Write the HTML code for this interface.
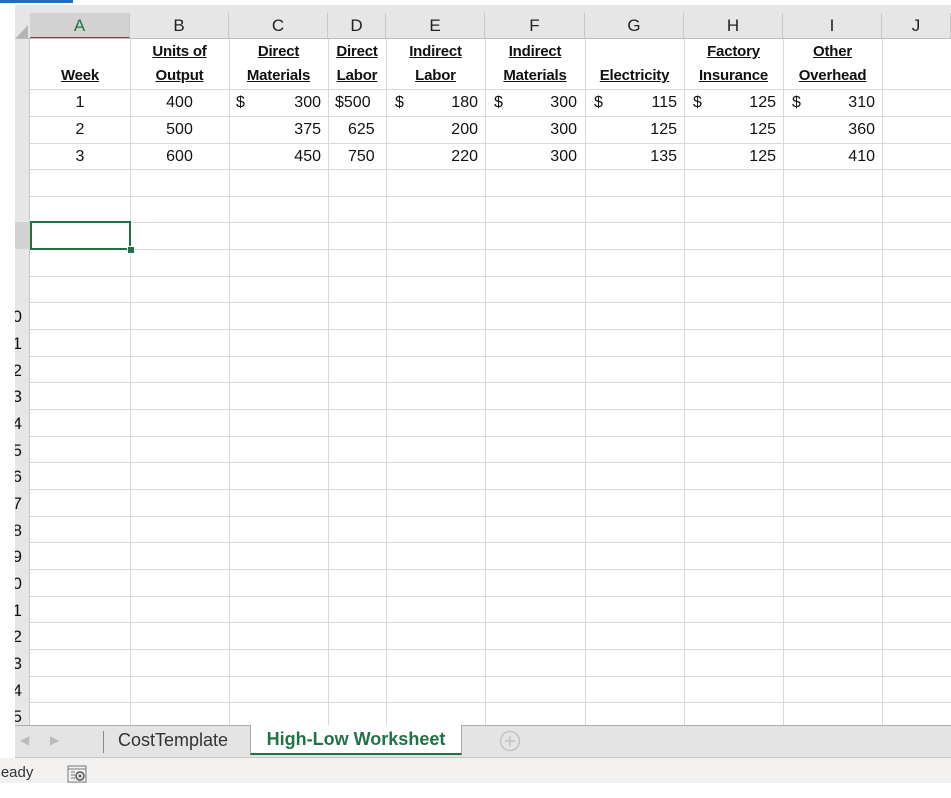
<!DOCTYPE html>
<html><head><meta charset="utf-8"><style>
body{margin:0;width:951px;height:798px;background:#fff;position:relative;overflow:hidden;font-family:"Liberation Sans",Arial,sans-serif;}
.a{position:absolute;}
.ch{position:absolute;top:13px;height:26px;line-height:26px;text-align:center;font-size:17px;color:#222;border-right:1px solid #c8c8c8;box-sizing:border-box;}
.vl{position:absolute;top:39px;width:1px;height:687px;background:#d9d9d9;}
.hl{position:absolute;left:30px;width:921px;height:1px;background:#d9d9d9;}
.rh{position:absolute;left:15px;width:15px;overflow:hidden;height:26px;}
.rh span{position:absolute;right:8px;top:4px;font-size:17px;color:#111;}
.h{position:absolute;font-size:15px;font-weight:bold;text-decoration:underline;color:#111;text-align:center;white-space:nowrap;letter-spacing:-0.2px;}
.n{position:absolute;font-size:16px;color:#111;white-space:nowrap;}
</style></head><body>
<div class="a" style="left:0;top:0;width:73px;height:3px;background:#1e6fc9"></div>
<div class="a" style="left:15px;top:5px;width:936px;height:34px;background:#e6e6e6"></div>
<div class="a" style="left:15px;top:39px;width:15px;height:687px;background:#e6e6e6;border-right:1px solid #c8c8c8;box-sizing:border-box"></div>
<svg class="a" style="left:15px;top:13px" width="15" height="26"><polygon points="13,12 13,25 1,25" fill="#b4b4b4"/></svg>
<div class="ch" style="left:30px;width:100px;background:#d2d2d2;color:#217346;border-bottom:2px solid #217346">A</div>
<div class="ch" style="left:130px;width:99px">B</div>
<div class="ch" style="left:229px;width:99px">C</div>
<div class="ch" style="left:328px;width:58px">D</div>
<div class="ch" style="left:386px;width:99px">E</div>
<div class="ch" style="left:485px;width:100px">F</div>
<div class="ch" style="left:585px;width:99px">G</div>
<div class="ch" style="left:684px;width:99px">H</div>
<div class="ch" style="left:783px;width:99px">I</div>
<div class="ch" style="left:882px;width:69px">J</div>
<div class="a" style="left:15px;top:38px;width:936px;height:1px;background:#bdbdbd"></div>

<div class="vl" style="left:130px"></div><div class="vl" style="left:229px"></div><div class="vl" style="left:328px"></div><div class="vl" style="left:386px"></div><div class="vl" style="left:485px"></div><div class="vl" style="left:585px"></div><div class="vl" style="left:684px"></div><div class="vl" style="left:783px"></div><div class="vl" style="left:882px"></div>

<div class="hl" style="top:89px"></div><div class="hl" style="top:116px"></div><div class="hl" style="top:143px"></div><div class="hl" style="top:169px"></div><div class="hl" style="top:196px"></div><div class="hl" style="top:222px"></div><div class="hl" style="top:249px"></div><div class="hl" style="top:276px"></div><div class="hl" style="top:302px"></div><div class="hl" style="top:329px"></div><div class="hl" style="top:356px"></div><div class="hl" style="top:382px"></div><div class="hl" style="top:409px"></div><div class="hl" style="top:436px"></div><div class="hl" style="top:462px"></div><div class="hl" style="top:489px"></div><div class="hl" style="top:516px"></div><div class="hl" style="top:542px"></div><div class="hl" style="top:569px"></div><div class="hl" style="top:596px"></div><div class="hl" style="top:622px"></div><div class="hl" style="top:649px"></div><div class="hl" style="top:676px"></div><div class="hl" style="top:702px"></div>

<div class="rh" style="top:303px"><span>10</span></div>
<div class="rh" style="top:330px"><span>11</span></div>
<div class="rh" style="top:357px"><span>12</span></div>
<div class="rh" style="top:383px"><span>13</span></div>
<div class="rh" style="top:410px"><span>14</span></div>
<div class="rh" style="top:437px"><span>15</span></div>
<div class="rh" style="top:463px"><span>16</span></div>
<div class="rh" style="top:490px"><span>17</span></div>
<div class="rh" style="top:517px"><span>18</span></div>
<div class="rh" style="top:543px"><span>19</span></div>
<div class="rh" style="top:570px"><span>20</span></div>
<div class="rh" style="top:597px"><span>21</span></div>
<div class="rh" style="top:623px"><span>22</span></div>
<div class="rh" style="top:650px"><span>23</span></div>
<div class="rh" style="top:677px"><span>24</span></div>
<div class="rh" style="top:703px"><span>25</span></div>
<div class="a" style="left:15px;top:222px;width:15px;height:27px;background:#d2d2d2"></div>

<div class="h" style="left:30px;width:100px;top:67px">Week</div>
<div class="h" style="left:130px;width:99px;top:43px">Units of </div>
<div class="h" style="left:130px;width:99px;top:67px">Output</div>
<div class="h" style="left:229px;width:99px;top:43px">Direct </div>
<div class="h" style="left:229px;width:99px;top:67px">Materials</div>
<div class="h" style="left:328px;width:58px;top:43px">Direct </div>
<div class="h" style="left:328px;width:58px;top:67px">Labor</div>
<div class="h" style="left:386px;width:99px;top:43px">Indirect </div>
<div class="h" style="left:386px;width:99px;top:67px">Labor</div>
<div class="h" style="left:485px;width:100px;top:43px">Indirect </div>
<div class="h" style="left:485px;width:100px;top:67px">Materials</div>
<div class="h" style="left:585px;width:99px;top:67px">Electricity</div>
<div class="h" style="left:684px;width:99px;top:43px">Factory </div>
<div class="h" style="left:684px;width:99px;top:67px">Insurance</div>
<div class="h" style="left:783px;width:99px;top:43px">Other </div>
<div class="h" style="left:783px;width:99px;top:67px">Overhead</div>

<div class="n" style="left:30px;width:100px;text-align:center;top:94px">1</div>
<div class="n" style="left:30px;width:100px;text-align:center;top:121px">2</div>
<div class="n" style="left:30px;width:100px;text-align:center;top:148px">3</div>
<div class="n" style="left:130px;width:99px;text-align:center;top:94px">400</div>
<div class="n" style="left:130px;width:99px;text-align:center;top:121px">500</div>
<div class="n" style="left:130px;width:99px;text-align:center;top:148px">600</div>

<div class="n" style="left:236px;top:94px">$</div>
<div class="n" style="left:229px;width:92px;text-align:right;top:94px">300</div>
<div class="n" style="left:229px;width:92px;text-align:right;top:121px">375</div>
<div class="n" style="left:229px;width:92px;text-align:right;top:148px">450</div>

<div class="n" style="left:335px;top:94px">$500</div>
<div class="n" style="left:348px;top:121px">625</div>
<div class="n" style="left:348px;top:148px">750</div>

<div class="n" style="left:395px;top:94px">$</div>
<div class="n" style="left:386px;width:92px;text-align:right;top:94px">180</div>
<div class="n" style="left:386px;width:92px;text-align:right;top:121px">200</div>
<div class="n" style="left:386px;width:92px;text-align:right;top:148px">220</div>

<div class="n" style="left:494px;top:94px">$</div>
<div class="n" style="left:485px;width:92px;text-align:right;top:94px">300</div>
<div class="n" style="left:485px;width:92px;text-align:right;top:121px">300</div>
<div class="n" style="left:485px;width:92px;text-align:right;top:148px">300</div>

<div class="n" style="left:594px;top:94px">$</div>
<div class="n" style="left:585px;width:92px;text-align:right;top:94px">115</div>
<div class="n" style="left:585px;width:92px;text-align:right;top:121px">125</div>
<div class="n" style="left:585px;width:92px;text-align:right;top:148px">135</div>

<div class="n" style="left:693px;top:94px">$</div>
<div class="n" style="left:684px;width:92px;text-align:right;top:94px">125</div>
<div class="n" style="left:684px;width:92px;text-align:right;top:121px">125</div>
<div class="n" style="left:684px;width:92px;text-align:right;top:148px">125</div>

<div class="n" style="left:792px;top:94px">$</div>
<div class="n" style="left:783px;width:92px;text-align:right;top:94px">310</div>
<div class="n" style="left:783px;width:92px;text-align:right;top:121px">360</div>
<div class="n" style="left:783px;width:92px;text-align:right;top:148px">410</div>

<div class="a" style="left:30px;top:221px;width:101px;height:29px;border:2px solid #217346;box-sizing:border-box"></div>
<div class="a" style="left:127px;top:246px;width:6px;height:6px;background:#217346;border:1px solid #fff"></div>

<div class="a" style="left:15px;top:725px;width:936px;height:33px;background:#e4e4e4;border-top:1px solid #ababab;border-bottom:1px solid #c6c6c6;box-sizing:border-box"></div>
<div class="a" style="left:20px;top:733px;font-size:12px;color:#bbb">&#9664;</div>
<div class="a" style="left:50px;top:733px;font-size:12px;color:#bbb">&#9654;</div>
<div class="a" style="left:103px;top:731px;width:1px;height:22px;background:#888"></div>
<div class="a" style="left:118px;top:730px;font-size:18px;color:#333">CostTemplate</div>
<div class="a" style="left:250px;top:725px;width:212px;height:30px;background:#fff;border-left:1px solid #ababab;border-right:1px solid #ababab;border-bottom:2px solid #217346;box-sizing:border-box"></div>
<div class="a" style="left:250px;top:729px;width:212px;text-align:center;font-size:18px;font-weight:bold;color:#217346">High-Low Worksheet</div>
<svg class="a" style="left:499px;top:730px" width="22" height="22"><circle cx="11" cy="11" r="9.5" fill="none" stroke="#c4c4c4" stroke-width="1.5"/><path d="M11 6V16M6 11H16" stroke="#c4c4c4" stroke-width="1.5"/></svg>

<div class="a" style="left:0;top:758px;width:951px;height:25px;background:#f2f1f0"></div>
<div class="a" style="left:0;top:764px;font-size:15px;color:#333;width:40px;overflow:hidden;white-space:nowrap"><span style="margin-left:-10px">Ready</span></div>
<svg class="a" style="left:67px;top:765px" width="22" height="18"><rect x="1" y="1" width="18" height="16" fill="none" stroke="#777"/><line x1="1" y1="4" x2="19" y2="4" stroke="#777"/><circle cx="13" cy="11" r="4" fill="none" stroke="#555" stroke-width="1.5"/><circle cx="13" cy="11" r="1.5" fill="#555"/><line x1="4" y1="7" x2="8" y2="7" stroke="#777"/><line x1="4" y1="10" x2="8" y2="10" stroke="#777"/><line x1="4" y1="13" x2="8" y2="13" stroke="#777"/></svg>
</body></html>
